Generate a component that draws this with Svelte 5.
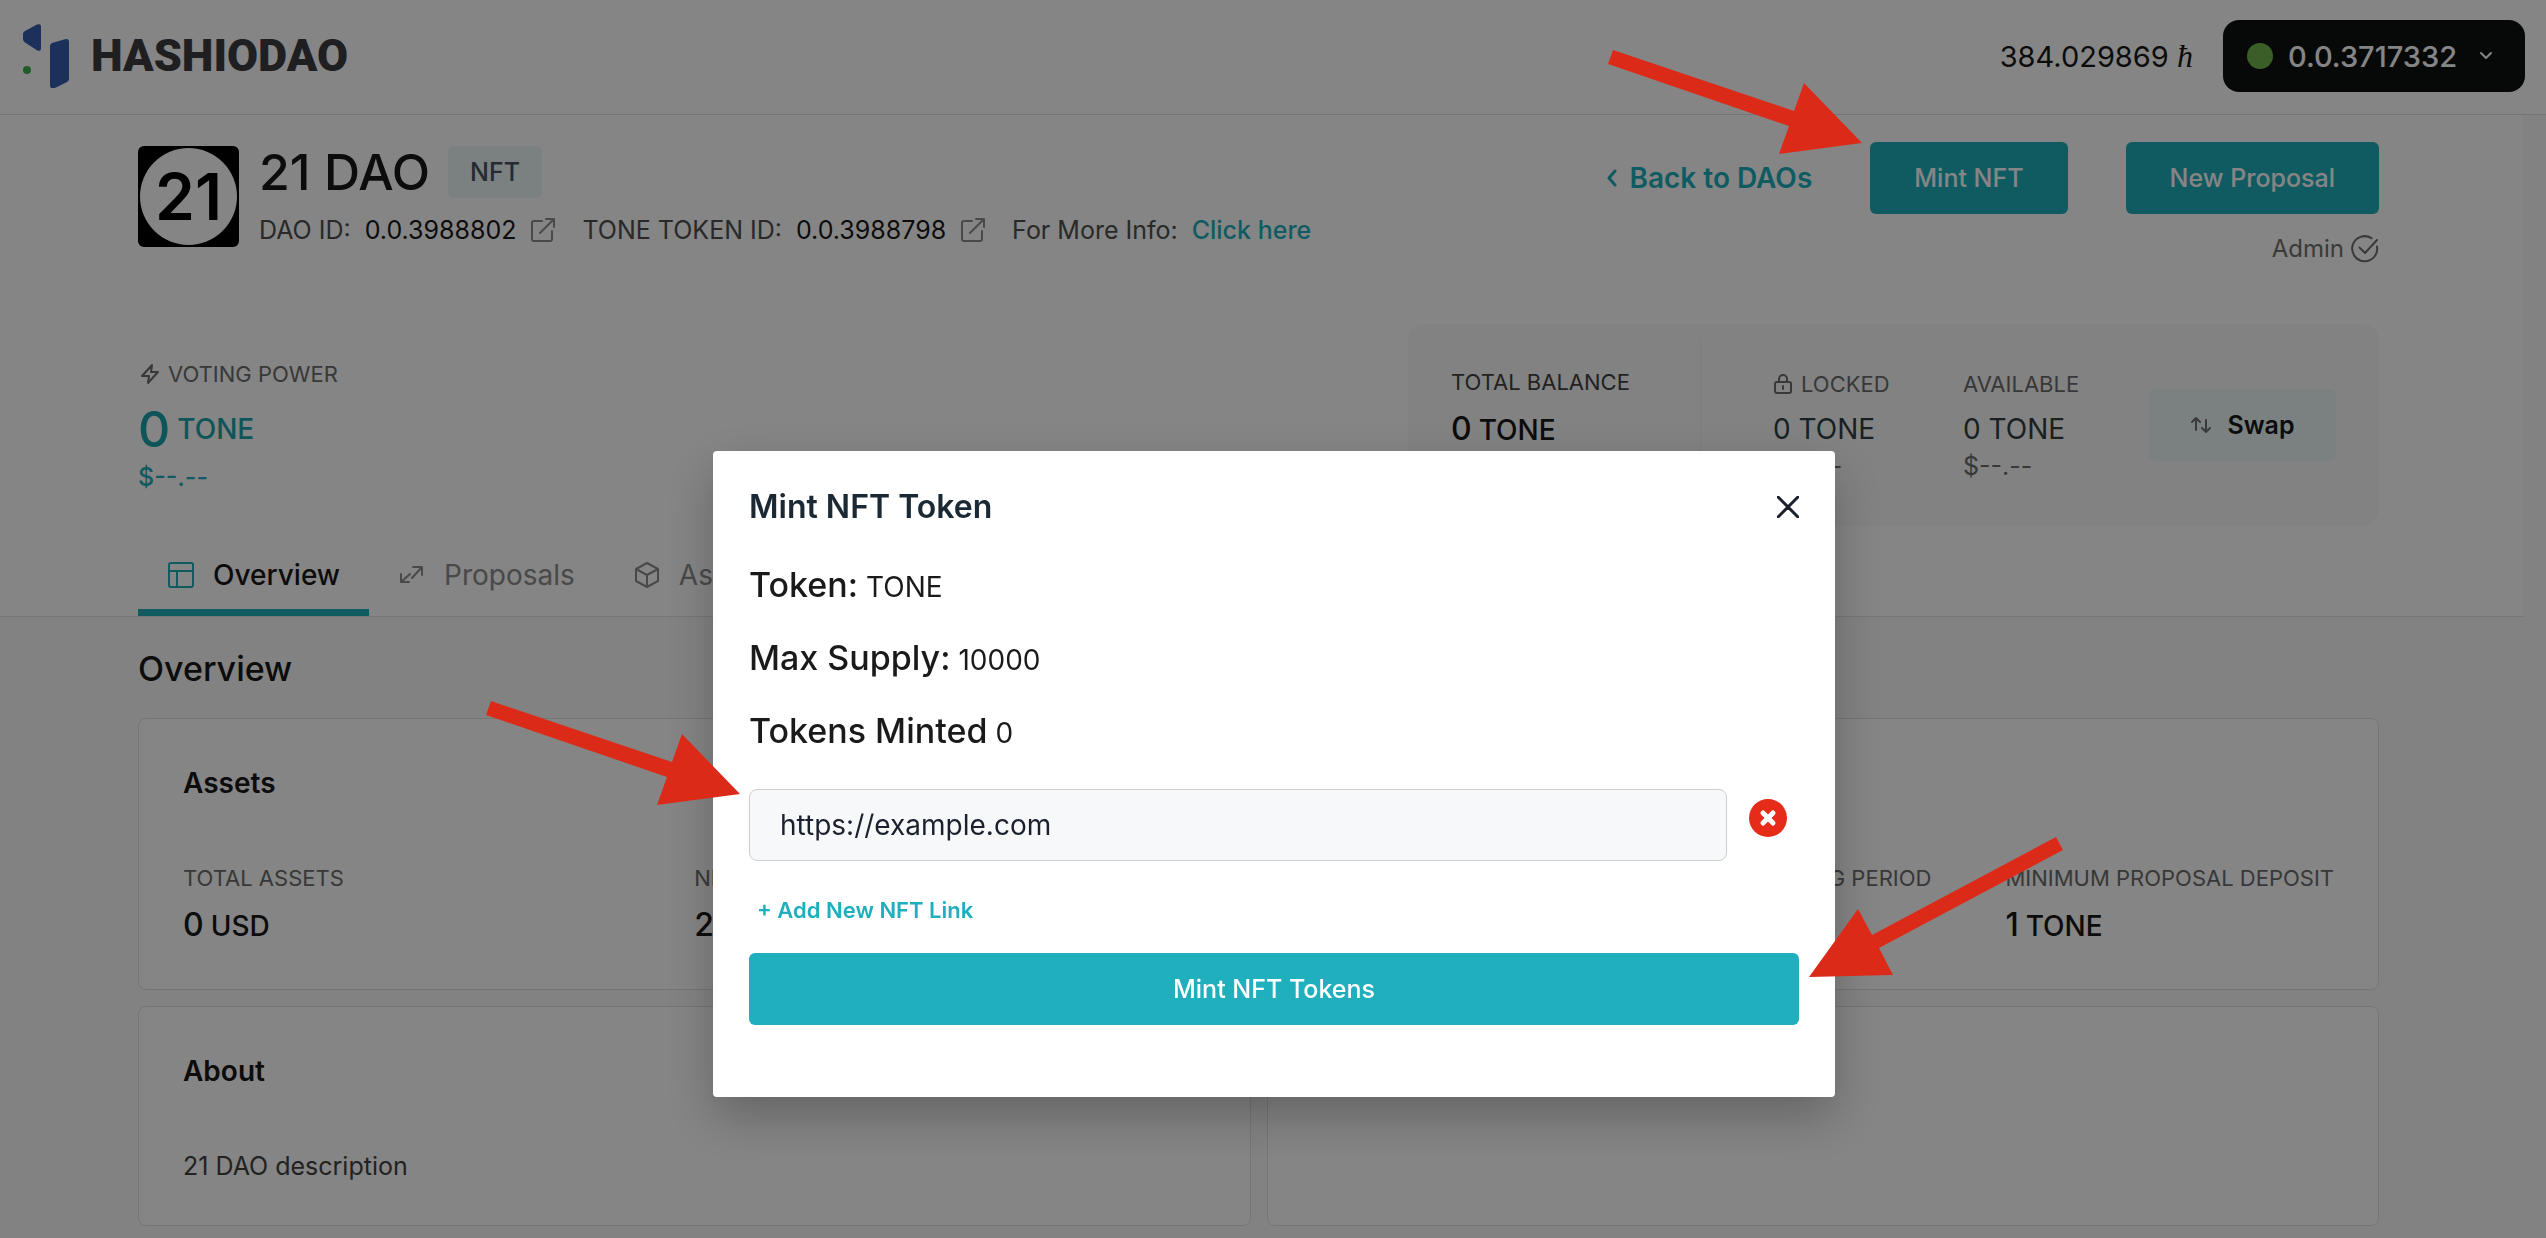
<script>
  let link = $state('https://example.com');
</script>

{#snippet external()}
  <svg class="external" viewBox="0 0 26 26" aria-hidden="true">
    <path d="M12 4H4a2 2 0 0 0-2 2v16a2 2 0 0 0 2 2h16a2 2 0 0 0 2-2v-8M10 16 24 2M16 2h8v8" />
  </svg>
{/snippet}

<div class="app">
  <header class="topbar">
    <a class="brand" href="#home">
      <svg class="mark" viewBox="0 0 46 64" aria-hidden="true">
        <path fill="#355fae" d="M14 .6Q18 -1 18 3V24Q18 28 14 26.300L2 18.500Q0 17 0 15V10Q0 8 2 7Z" />
        <path fill="#355fae" d="M27 21.500Q27 20 29 19L41 15.500Q46 14 46 18V55Q46 57 44 58L33 63.500Q27 66 27 61Z" />
        <circle cx="4" cy="46" r="4" fill="#3fae4e" />
      </svg>
      <span class="wordmark">HASHIODAO</span>
    </a>
    <div class="wallet">
      <span class="hbar">384.029869 <i>ħ</i></span>
      <button class="account">
        <span class="dot"></span>0.0.3717332
        <svg class="chevron" viewBox="0 0 14 10" aria-hidden="true"><path d="m2 2 5 5 5-5" /></svg>
      </button>
    </div>
  </header>

  <div class="page">
    <section class="hero">
      <div class="intro">
        <div class="identity">
          <div class="avatar"><span>21</span></div>
          <div class="names">
            <div class="title-row"><h1>21 DAO</h1><span class="badge">NFT</span></div>
            <div class="ids">
              <span class="id"><span>DAO ID:</span><b>0.0.3988802</b>{@render external()}</span>
              <span class="id"><span>TONE TOKEN ID:</span><b>0.0.3988798</b>{@render external()}</span>
              <span class="id"><span>For More Info:</span><a href="#info">Click here</a></span>
            </div>
          </div>
        </div>
        <div class="side">
          <div class="actions">
            <a class="back" href="#daos">
              <svg viewBox="0 0 10 18" aria-hidden="true"><path d="M8 2 2 9l6 7" /></svg>Back to DAOs
            </a>
            <button class="solid">Mint NFT</button>
            <button class="solid">New Proposal</button>
          </div>
          <div class="admin">
            Admin
            <svg viewBox="0 0 28 28" aria-hidden="true"><path d="M26 11.500a12.500 12.500 0 1 1-5.500-8.300M8.500 12.500l5.500 5.500L26 5" /></svg>
          </div>
        </div>
      </div>

      <div class="stats">
        <div class="voting">
          <div class="caption">
            <svg class="bolt" viewBox="0 0 20 22" aria-hidden="true"><path d="m12 2-10 11h7l-1 7L18 9h-7z" /></svg>VOTING POWER
          </div>
          <div class="power"><strong>0</strong> TONE</div>
          <div class="usd">$--.--</div>
        </div>
        <div class="balance">
          <div class="total">
            <div class="caption">TOTAL BALANCE</div>
            <div class="amount"><strong>0</strong> TONE</div>
          </div>
          <div class="part">
            <div class="caption">
              <svg class="lock" viewBox="0 0 18 22" aria-hidden="true"><rect x="1" y="9" width="16" height="11" rx="2" /><path d="M5 9V6a4 4 0 0 1 8 0v3M9 13v3" /></svg>LOCKED
            </div>
            <div class="amount">0 TONE</div>
            <div class="usd">$--.--</div>
          </div>
          <div class="part">
            <div class="caption">AVAILABLE</div>
            <div class="amount">0 TONE</div>
            <div class="usd">$--.--</div>
          </div>
          <button class="swap">
            <svg viewBox="0 0 22 18" aria-hidden="true"><path d="M6 14V2M2 6l4-4 4 4M16 4v12M12 12l4 4 4-4" /></svg>Swap
          </button>
        </div>
      </div>

      <nav class="tabs">
        <a class="tab active" href="#overview">
          <svg viewBox="0 0 28 28" aria-hidden="true"><rect x="2" y="2" width="24" height="24" rx="2" /><path d="M2 10h24M10 10v16" /></svg>Overview
        </a>
        <a class="tab" href="#proposals">
          <svg viewBox="0 0 28 28" aria-hidden="true"><path d="M3 13v8h8M3 21l9-8M15 6h9v8M24 6l-10 11" /></svg>Proposals
        </a>
        <a class="tab" href="#assets">
          <svg viewBox="0 0 28 28" aria-hidden="true"><path d="M14 2 25 8v12l-11 6L3 20V8zM3 8l11 6 11-6M14 14v12" /></svg>Assets
        </a>
      </nav>
    </section>

    <main class="content">
      <h2>Overview</h2>
      <div class="cards">
        <article class="card first">
          <h3>Assets</h3>
          <div class="figures halves">
            <div><div class="caption">TOTAL ASSETS</div><div class="amount"><strong>0</strong> USD</div></div>
            <div><div class="caption">NFTS</div><div class="amount"><strong>2</strong></div></div>
          </div>
        </article>
        <article class="card first">
          <h3>&nbsp;</h3>
          <div class="figures ends">
            <div><div class="caption">VOTING PERIOD</div></div>
            <div><div class="caption">MINIMUM PROPOSAL DEPOSIT</div><div class="amount"><strong>1</strong> TONE</div></div>
          </div>
        </article>
        <article class="card second">
          <h3>About</h3>
          <p>21 DAO description</p>
        </article>
        <article class="card second"></article>
      </div>
    </main>
  </div>
</div>

<div class="overlay">
  <div class="modal" role="dialog" aria-modal="true" aria-labelledby="modal-title">
    <div class="modal-head">
      <h2 id="modal-title">Mint NFT Token</h2>
      <button class="close" aria-label="Close">
        <svg viewBox="0 0 22 22" aria-hidden="true"><path d="m1 1 20 20M21 1 1 21" /></svg>
      </button>
    </div>
    <div class="facts">
      <p>Token: <span>TONE</span></p>
      <p>Max Supply: <span>10000</span></p>
      <p>Tokens Minted <span>0</span></p>
    </div>
    <div class="link-row">
      <input type="text" aria-label="NFT link" bind:value={link} />
      <button class="remove" aria-label="Remove link">
        <svg viewBox="0 0 38 38" aria-hidden="true"><circle cx="19" cy="19" r="19" /><path d="m14 14 10 10M24 14 14 24" /></svg>
      </button>
    </div>
    <button class="add">+ Add New NFT Link</button>
    <button class="solid submit">Mint NFT Tokens</button>
  </div>
</div>

<svg class="arrows" viewBox="0 0 2546 1238" aria-hidden="true">
  <path d="M1613 50 1794 111 1804 83 1862 143 1779 154 1789 126 1608 64Z" />
  <path d="M491 701 672 762 682 734 740 794 657 805 667 777 486 715Z" />
  <path d="M2056 837 1872 935 1858 909 1809 977 1893 975 1879 948 2063 850Z" />
</svg>

<style>
  :global(body) { background: #fafafa; font-family: Inter, "Liberation Sans", sans-serif; color: #171717; }
  :global(*) { box-sizing: border-box; }
  h1, h2, h3, p { margin: 0; font-weight: 500; }
  button { border: 0; padding: 0; background: none; font: inherit; color: inherit; cursor: pointer; }
  a { color: #1fafbd; text-decoration: none; }
  svg { display: block; flex: none; fill: none; stroke-width: 2; stroke-linecap: round; stroke-linejoin: round; stroke: currentColor; }

  .topbar { display: flex; justify-content: space-between; align-items: center; height: 115px; padding: 0 21px 2px 23px; background: #fff; border-bottom: 1px solid #e0e0e0; }
  .brand { display: flex; align-items: center; gap: 22px; }
  .mark { width: 46px; height: 64px; stroke: none; }
  .wordmark { font: 900 45px/64px Roboto, sans-serif; color: #3c3c40; }
  .wallet { display: flex; align-items: center; gap: 30px; font-size: 29px; }
  .hbar i { font-family: "Liberation Serif", serif; font-size: 32px; }
  .account { display: flex; align-items: center; gap: 15px; height: 72px; padding: 0 32px 0 24px; border-radius: 16px; background: #0e1111; color: #fff; font-weight: 500; }
  .dot { width: 26px; height: 26px; border-radius: 50%; background: #71b54f; }
  .chevron { width: 14px; height: 10px; margin-left: 7px; }

  .page { padding-right: 23px; }
  .hero { background: #fff; border-bottom: 1px solid #e0e0e0; padding: 27px 144px 0 138px; }
  .intro { display: flex; justify-content: space-between; }
  .identity { display: flex; gap: 20px; padding-top: 4px; }
  .avatar { display: flex; width: 101px; height: 101px; padding: 2px; border-radius: 6px; background: #000; color: #000; }
  .avatar span { flex: 1; border-radius: 50%; background: #fff; font-size: 64px; font-weight: 600; line-height: 97px; text-align: center; }
  .names { display: flex; flex-direction: column; gap: 18px; }
  .title-row { display: flex; align-items: center; gap: 18px; height: 52px; }
  h1 { font-size: 50px; line-height: 52px; }
  .badge { padding: 0 22px; border-radius: 6px; background: #ebf7f8; color: #4a5260; font-size: 25px; font-weight: 500; line-height: 52px; }
  .ids { display: flex; gap: 26px; font-size: 25px; line-height: 28px; color: #505050; }
  .id { display: flex; align-items: center; gap: 14px; }
  .id b { color: #171717; font-weight: 400; }
  .id a { font-weight: 500; }
  .external { width: 26px; height: 26px; color: #8c8c8c; }
  .side { display: flex; flex-direction: column; align-items: flex-end; gap: 21px; }
  .actions { display: flex; align-items: center; }
  .back { display: flex; align-items: center; gap: 12px; margin-right: 58px; font-size: 28px; font-weight: 600; }
  .back svg { width: 10px; height: 18px; stroke-width: 3; }
  .solid { height: 72px; padding: 0 44px; border-radius: 6px; background: #1fafbd; color: #fff; font-size: 25px; font-weight: 500; }
  .solid + .solid { margin-left: 58px; }
  .admin { display: flex; align-items: center; gap: 7px; font-size: 24px; line-height: 28px; color: #707070; }
  .admin svg { width: 28px; height: 28px; }

  .stats { display: flex; justify-content: space-between; margin-top: 61px; }
  .caption { display: flex; align-items: center; gap: 8px; font-size: 22px; line-height: 28px; color: #6c6c6c; white-space: nowrap; }
  .voting { padding-top: 36px; }
  .bolt { width: 20px; height: 22px; }
  .voting .caption { padding-left: 2px; }
  .power { display: flex; align-items: center; gap: 7px; margin-top: 17px; font-size: 28px; font-weight: 500; line-height: 48px; color: #1ca3ab; }
  .power strong { font-size: 50px; font-weight: 500; }
  .voting .usd { margin-top: 10px; color: #1fafbd; font-weight: 500; }
  .usd { font-size: 25px; line-height: 28px; color: #6c6c6c; }
  .balance { display: flex; height: 202px; padding: 16px 43px; border-radius: 16px; background: #fafafa; }
  .total { width: 250px; margin-right: 72px; padding-top: 28px; border-right: 1px solid #f0f0f0; }
  .total .caption { color: #424242; }
  .amount { display: flex; align-items: baseline; gap: 7px; height: 40px; font-size: 28px; line-height: 40px; font-weight: 500; }
  .amount strong { font-size: 32px; font-weight: 500; }
  .total .amount { margin-top: 13px; }
  .part { width: 190px; padding-top: 30px; }
  .part + .swap { margin-left: -4px; }
  .part .amount { margin: 11px 0 3px; color: #303f45; font-weight: 400; }
  .lock { width: 20px; height: 22px; }
  .swap { display: flex; align-items: center; justify-content: center; gap: 15px; align-self: center; width: 187px; height: 72px; border-radius: 6px; background: #ebf7f8; font-size: 25px; font-weight: 600; }
  .swap svg { width: 22px; height: 18px; color: #707070; }

  .tabs { display: flex; margin-top: 14px; }
  .tab { display: flex; align-items: center; gap: 18px; height: 76px; padding: 0 29px; border-bottom: 7px solid transparent; color: #8c8c8c; font-size: 28px; }
  .tab svg { width: 28px; height: 28px; }
  .active { border-color: #1fafbd; color: #171717; font-weight: 500; }
  .active svg { color: #1fafbd; }

  .content { padding: 30px 144px 12px 138px; }
  .content h2 { font-size: 34px; line-height: 44px; }
  .cards { display: grid; grid-template-columns: 1fr 1fr; gap: 16px; margin-top: 27px; }
  .card { padding: 46px 44px; border: 1px solid #e2e2e2; border-radius: 8px; background: #fff; }
  .first { height: 272px; }
  .second { height: 220px; }
  h3 { font-size: 28px; font-weight: 600; line-height: 36px; }
  .figures { display: grid; margin-top: 63px; }
  .halves { grid-template-columns: 1fr 1fr; }
  .ends { grid-template-columns: auto auto; justify-content: end; gap: 74px; }
  .figures .amount { margin-top: 13px; }
  .card p { margin-top: 63px; font-size: 25px; font-weight: 400; line-height: 28px; color: #424242; }

  .overlay { position: fixed; inset: 0; padding: 451px 0 0 2px; background: rgba(0, 0, 0, 0.48); }
  .modal { width: 1122px; max-width: 100%; margin: 0 auto; padding: 34px 36px 72px; border-radius: 4px; background: #fff; box-shadow: 0 20px 50px rgba(0, 0, 0, 0.25); color: #1a1a1a; }
  .modal-head { display: flex; align-items: center; justify-content: space-between; }
  .modal-head h2 { font-size: 32px; font-weight: 600; line-height: 44px; color: #1a2933; }
  .close svg { width: 22px; height: 22px; stroke-width: 3; color: #1a202c; }
  .facts { display: flex; flex-direction: column; gap: 29px; margin: 34px 0 36px; }
  .facts p { display: flex; align-items: baseline; gap: 8px; height: 44px; font-size: 34px; line-height: 44px; }
  .facts span { font-size: 28px; font-weight: 400; }
  .link-row { display: flex; align-items: flex-start; gap: 22px; padding-right: 12px; }
  input { flex: 1; min-width: 0; height: 72px; padding: 0 30px; border: 1px solid #cbcfd0; border-radius: 8px; background: #f7f8fa; color: #1a202c; font: 400 28px Inter, sans-serif; }
  .remove { margin-top: 10px; }
  .remove svg { width: 38px; height: 38px; stroke: #fff; stroke-width: 5; }
  .remove circle { fill: #e62c18; stroke: none; }
  .add { display: block; margin: 35px 0 29px 8px; color: #1fafbd; font-size: 22px; font-weight: 600; line-height: 28px; }
  .submit { display: block; width: 100%; }
  .arrows { position: fixed; top: 0; left: 0; width: 100%; fill: #dc2a18; stroke: none; pointer-events: none; }
</style>
